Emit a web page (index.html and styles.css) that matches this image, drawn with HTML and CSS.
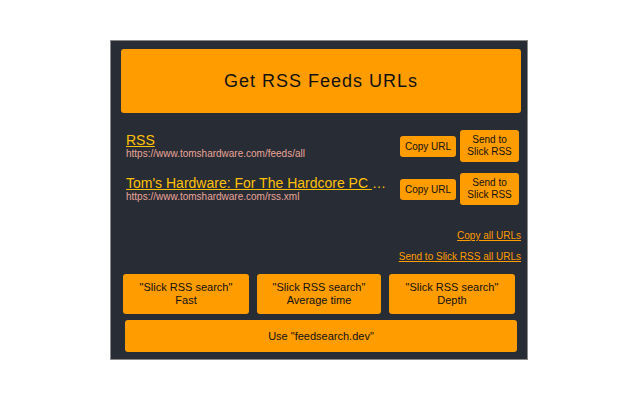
FILE: index.html
```html
<!DOCTYPE html>
<html>
<head>
<meta charset="utf-8">
<link rel="stylesheet" href="styles.css">
</head>
<body>
<div class="popup">
  <button class="get-btn">Get RSS Feeds URLs</button>
  <div class="feeds">
    <div class="feed">
      <div class="info">
        <a class="title" href="#">RSS</a>
        <div class="url">https://www.tomshardware.com/feeds/all</div>
      </div>
      <div class="actions">
        <button class="btn copy">Copy URL</button>
        <button class="btn send">Send to<br>Slick RSS</button>
      </div>
    </div>
    <div class="feed">
      <div class="info">
        <a class="title" href="#">Tom's Hardware: For The Hardcore PC Enthusiast</a>
        <div class="url">https://www.tomshardware.com/rss.xml</div>
      </div>
      <div class="actions">
        <button class="btn copy">Copy URL</button>
        <button class="btn send">Send to<br>Slick RSS</button>
      </div>
    </div>
  </div>
  <div class="all-links">
    <a href="#">Copy all URLs</a>
    <a href="#">Send to Slick RSS all URLs</a>
  </div>
  <div class="search-grid">
    <button class="btn big">"Slick RSS search"<br>Fast</button>
    <button class="btn big">"Slick RSS search"<br>Average time</button>
    <button class="btn big">"Slick RSS search"<br>Depth</button>
  </div>
  <button class="btn feedsearch">Use "feedsearch.dev"</button>
</div>
</body>
</html>
```

FILE: styles.css
```css
html, body {
  margin: 0;
  padding: 0;
  background: #ffffff;
  font-family: "Liberation Sans", Arial, sans-serif;
}

.popup {
  margin: 40px 0 0 110px;
  background: #282c34;
  border: 1px solid #8a8a8a;
  padding: 8px 6px 0 10px;
  box-sizing: content-box;
  width: 400px;
  height: 310px;
  display: flex;
  flex-direction: column;
}

button {
  font-family: "Liberation Sans", Arial, sans-serif;
  border: none;
  background: #ff9c00;
  color: #111;
  border-radius: 3px;
  cursor: pointer;
  margin: 0;
}

.get-btn {
  width: 400px;
  height: 64px;
  font-size: 18px;
  letter-spacing: 1px;
  flex: none;
}

.feeds {
  margin-top: 17px;
  display: flex;
  flex-direction: column;
  gap: 11px;
}

.feed {
  display: flex;
  align-items: center;
  padding-left: 5px;
  padding-right: 2px;
}

.info {
  flex: 1;
  min-width: 0;
  display: flex;
  flex-direction: column;
  padding-right: 14px;
}

.title {
  color: #ffc107;
  font-size: 14px;
  line-height: 16px;
  white-space: nowrap;
  overflow: hidden;
  text-overflow: ellipsis;
  text-decoration: underline;
}

.url {
  color: #e8a598;
  font-size: 10px;
  line-height: 12px;
  white-space: nowrap;
  overflow: hidden;
}

.actions {
  display: flex;
  align-items: center;
  gap: 4px;
  flex: none;
}

.btn {
  font-size: 10px;
}

.copy {
  width: 56px;
  height: 21px;
  line-height: 13px;
  padding: 0;
}

.send {
  width: 59px;
  height: 32px;
  line-height: 12px;
  padding: 0;
}

.all-links {
  margin-top: 25px;
  display: flex;
  flex-direction: column;
  align-items: flex-end;
  gap: 9px;
}

.all-links a {
  color: #ff9c00;
  font-size: 10px;
  line-height: 12px;
  text-decoration: underline;
}

.search-grid {
  margin-top: 11px;
  margin-left: 2px;
  display: grid;
  grid-template-columns: 126px 124px 126px;
  gap: 8px;
}

.big {
  height: 40px;
  font-size: 11px;
  line-height: 13px;
  padding: 0;
}

.feedsearch {
  margin-top: 6px;
  margin-left: 4px;
  width: 392px;
  height: 32px;
  font-size: 11px;
  padding: 0;
}
```
